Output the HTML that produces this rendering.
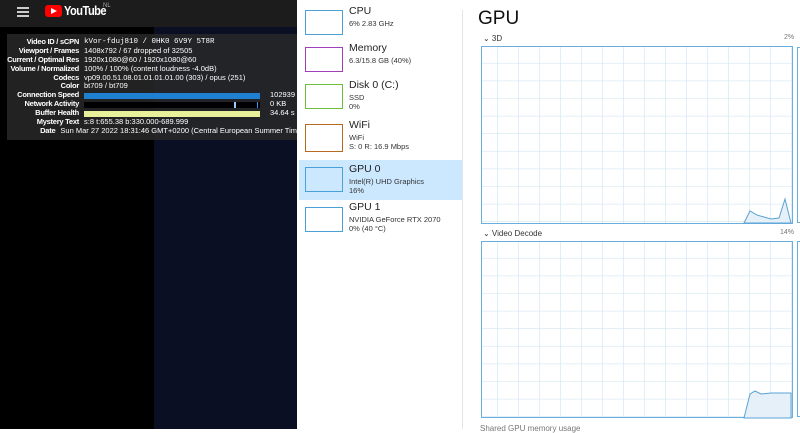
<!DOCTYPE html>
<html><head><meta charset="utf-8"><style>
*{margin:0;padding:0;box-sizing:border-box}
body{width:800px;height:429px;overflow:hidden;position:relative;background:#fff;font-family:"Liberation Sans",sans-serif}
.yt{position:absolute;left:0;top:0;width:297px;height:429px;background:#000}
.yt .hdr{position:absolute;left:0;top:0;width:297px;height:27px;background:#1c1c1c}
.yt .navy{position:absolute;left:154px;top:27px;width:143px;height:402px;background:#0a0f24}
.stats{position:absolute;left:7px;top:34px;width:290px;height:106px;background:rgba(40,40,40,.85);color:#fff;font-size:7.5px;line-height:8.9px;padding-top:4px}
.row{display:flex;height:8.9px;white-space:nowrap}
.row .k{width:77px;text-align:right;font-weight:bold;padding-right:5px;letter-spacing:-.25px}
.row .v{flex:1}
.bar{height:6px;margin-top:1.5px;width:176px;margin-right:10px}
.tm{position:absolute;left:298px;top:0;width:502px;height:429px;background:#fff}
.item{position:absolute;left:1px;width:163px;height:40px}
.thumb{position:absolute;left:6px;width:38px;height:25px;border:1px solid}
.item .t{position:absolute;left:50px;top:-1px;font-size:10.5px;color:#222}
.item .s{position:absolute;left:50px;font-size:7.5px;color:#333;line-height:9px}
.gl{position:absolute;font-size:8px;color:#333}
</style></head><body>
<div class="yt">
 <div class="hdr"></div>
 <div style="position:absolute;left:17px;top:7px;width:12px;height:2px;background:#ccc;box-shadow:0 4px 0 #ccc,0 8px 0 #ccc"></div>
 <div style="position:absolute;left:45px;top:5px;width:17px;height:12px;background:#f00;border-radius:3px"></div>
 <div style="position:absolute;left:51px;top:8px;width:0;height:0;border-left:6px solid #fff;border-top:3px solid transparent;border-bottom:3px solid transparent"></div>
 <div style="position:absolute;left:64px;top:3px;color:#fff;font-size:13px;font-weight:bold;letter-spacing:-.6px;transform:scaleX(.85);transform-origin:left">YouTube</div>
 <div style="position:absolute;left:103px;top:3px;color:#aaa;font-size:6px">NL</div>
 <div class="navy"></div>
 <div class="stats">
  <div class="row"><span class="k">Video ID / sCPN</span><span class="v" style="font-family:'Liberation Mono',monospace">kVor-fduj810 / 0HK0 6V9Y 5T8R</span></div>
  <div class="row"><span class="k">Viewport / Frames</span><span class="v">1408x792 / 67 dropped of 32505</span></div>
  <div class="row"><span class="k">Current / Optimal Res</span><span class="v">1920x1080@60 / 1920x1080@60</span></div>
  <div class="row"><span class="k">Volume / Normalized</span><span class="v">100% / 100% (content loudness -4.0dB)</span></div>
  <div class="row"><span class="k">Codecs</span><span class="v">vp09.00.51.08.01.01.01.01.00 (303) / opus (251)</span></div>
  <div class="row"><span class="k">Color</span><span class="v">bt709 / bt709</span></div>
  <div class="row"><span class="k">Connection Speed</span><span class="bar" style="background:#1f7fd0"></span><span>102939</span></div>
  <div class="row"><span class="k">Network Activity</span><span class="bar" style="background:#000;position:relative"><i style="position:absolute;left:150px;top:0;width:2px;height:6px;background:#9cf"></i><i style="position:absolute;left:173px;top:0;width:1px;height:6px;background:#39f"></i></span><span>0 KB</span></div>
  <div class="row"><span class="k">Buffer Health</span><span class="bar" style="background:#e8f09a"></span><span>34.64 s</span></div>
  <div class="row"><span class="k">Mystery Text</span><span class="v">s:8 t:655.38 b:330.000-689.999</span></div>
  <div class="row"><span class="k">Date</span><span class="v">Sun Mar 27 2022 18:31:46 GMT+0200 (Central European Summer Tim</span></div>
 </div>
</div>
<div class="tm">
 <div style="position:absolute;left:164px;top:10px;width:1px;height:419px;background:#e5e5e5"></div>
 <div class="item" style="top:6px"><div class="thumb" style="top:4px;border-color:#4ba0d8"></div><div class="t">CPU</div><div class="s" style="top:13px">6% 2.83 GHz</div></div>
 <div class="item" style="top:43px"><div class="thumb" style="top:4px;border-color:#a040b8"></div><div class="t">Memory</div><div class="s" style="top:13px">6.3/15.8 GB (40%)</div></div>
 <div class="item" style="top:80px"><div class="thumb" style="top:4px;border-color:#6cbf3c"></div><div class="t">Disk 0 (C:)</div><div class="s" style="top:13px">SSD<br>0%</div></div>
 <div class="item" style="top:120px"><div class="thumb" style="top:4px;height:28px;border-color:#b86a20"></div><div class="t">WiFi</div><div class="s" style="top:13px">WiFi<br>S: 0 R: 16.9 Mbps</div></div>
 <div class="item" style="top:160px;background:#cce8ff"><div class="thumb" style="top:7px;border-color:#4ba0d8"></div><div class="t" style="top:3px">GPU 0</div><div class="s" style="top:17px">Intel(R) UHD Graphics<br>16%</div></div>
 <div class="item" style="top:202px"><div class="thumb" style="top:5px;border-color:#4ba0d8"></div><div class="t">GPU 1</div><div class="s" style="top:13px">NVIDIA GeForce RTX 2070<br>0% (40 °C)</div></div>
 <div style="position:absolute;left:180px;top:8px;font-size:19px;color:#111">GPU</div>
 <div class="gl" style="left:185px;top:34px">⌄ 3D</div><div class="gl" style="left:486px;top:34px;color:#777;font-size:7px">2%</div>
 <div class="gl" style="left:185px;top:229px">⌄ Video Decode</div><div class="gl" style="left:482px;top:229px;color:#777;font-size:7px">14%</div>
 <svg style="position:absolute;left:183px;top:46px" width="313" height="178">
  <defs><pattern id="g" x="-4" y="0" width="21" height="17.6" patternUnits="userSpaceOnUse"><path d="M21 0V17.6M0 17.6H21" stroke="#d2e6f4" stroke-width="1.3" fill="none"/></pattern></defs>
  <rect x="0.5" y="0.5" width="311" height="177" fill="url(#g)" stroke="#6aaedc"/>
  <path d="M263 177L269 165L276 169L283 171L290 173L298 172L304 153L310 177Z" fill="#e6f0f8" stroke="#5aa3d6"/>
 </svg>
 <svg style="position:absolute;left:183px;top:241px" width="313" height="178">
  <rect x="0.5" y="0.5" width="311" height="176" fill="url(#g)" stroke="#6aaedc"/>
  <path d="M263 177L269 153L274 150L280 153L290 152L300 152L310 152V177Z" fill="#e6f0f8" stroke="#5aa3d6"/>
 </svg>
 <div style="position:absolute;left:499px;top:47px;width:3px;height:176px;border:1px solid #6aaedc;border-right:none"></div>
 <div style="position:absolute;left:499px;top:241px;width:3px;height:176px;border:1px solid #6aaedc;border-right:none"></div>
 <div class="gl" style="left:182px;top:424px;color:#777">Shared GPU memory usage</div>
</div>
</body></html>
